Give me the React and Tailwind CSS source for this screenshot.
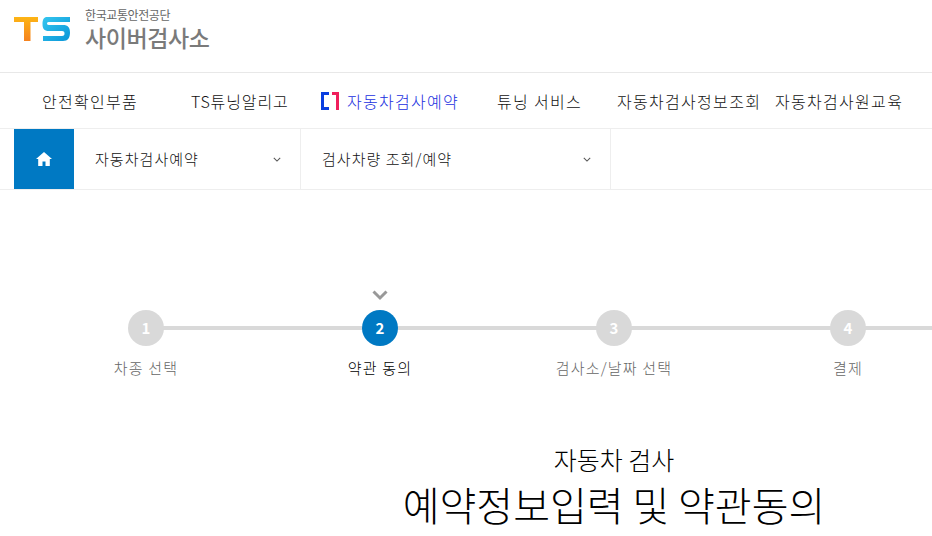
import React from "react";

const font = { fontFamily: '"Noto Sans CJK KR", "Noto Sans", sans-serif' };

function Chevron({ className }) {
  return (
    <svg viewBox="0 0 10 6" className={className} fill="none" stroke="currentColor" strokeWidth="1.300">
      <path d="M1 1l4 4 4-4" />
    </svg>
  );
}

function Logo() {
  return (
    <svg width="57" height="26" viewBox="0 0 57 26">
      <defs>
        <linearGradient id="o" x1="0" y1="0" x2="0" y2="1">
          <stop offset="0" stopColor="#fdb515" />
          <stop offset="1" stopColor="#f5821f" />
        </linearGradient>
        <linearGradient id="b" x1="0" y1="0" x2="1" y2="1">
          <stop offset="0" stopColor="#35c6ef" />
          <stop offset="1" stopColor="#0a96d8" />
        </linearGradient>
      </defs>
      <path d="M0 1h24v5H16.500v19H10V6H0z" fill="url(#o)" />
      <path d="M33 1h23v5H36c-2 0-3 .3-3 1.500S34 9 36 9h13c5 0 7 2.500 7 7.500S54 25 49 25H29v-5h19c2 0 2.500-1 2.500-2.500S50 15 48 15H35c-5 0-6.500-2.500-6.500-7S30 1 33 1z" fill="url(#b)" />
    </svg>
  );
}

function Step({ n, label, active, mark }) {
  return (
    <div className="relative w-[234px] shrink-0 flex flex-col items-center">
      <div className="absolute left-1/2 top-[41px] w-[234px] h-[4px] bg-[#d9d9d9]" />
      <div className="h-[20px] flex items-center justify-center">
        {mark && (
          <svg width="16" height="11" viewBox="0 0 16 11" fill="none" stroke="#999999" strokeWidth="3">
            <path d="M1.500 1.500L8 8l6.500-6.500" />
          </svg>
        )}
      </div>
      <div
        className={`relative mt-[5px] w-[36px] h-[36px] rounded-full flex items-center justify-center text-white text-[15px] font-bold ${active ? "bg-[#0079c3]" : "bg-[#d9d9d9]"}`}
      >
        {n}
      </div>
      <div className={`mt-[11px] text-[15px] font-light leading-[22px] tracking-[1.2px] whitespace-nowrap ${active ? "text-[#000000]" : "text-[#666666]"}`}>
        {label}
      </div>
    </div>
  );
}

export default function App() {
  return (
    <div className="w-[932px] h-[536px] overflow-hidden bg-white" style={font}>
      <header className="h-[73px] border-b border-[#e8e8e8] pl-[14px] pt-[8px] flex items-start">
        <div className="mt-[8px]"><Logo /></div>
        <div className="ml-[14px] flex flex-col">
          <span className="text-[12px] leading-[14px] text-[#666666] tracking-[-0.4px]">한국교통안전공단</span>
          <span className="mt-[1px] text-[23px] leading-[28px] font-medium text-[#7a7a7a] tracking-[-0.4px]">사이버검사소</span>
        </div>
      </header>

      <nav className="h-[56px] border-b border-[#eeeeee] flex items-center text-[16px] font-light tracking-[1.3px] text-[#111111] whitespace-nowrap">
        <span className="ml-[42px] w-[149px]">안전확인부품</span>
        <span className="w-[130px] tracking-[0.9px]">TS튜닝알리고</span>
        <span className="w-[176px] flex items-center text-[#1a30e0]">
          <svg width="18" height="18" viewBox="0 0 18 18" fill="none" strokeWidth="3" className="mr-[8px]">
            <path d="M8 1.500H1.500v15H8" stroke="#0a3ee0" />
            <path d="M11 1.500h5.500V18" stroke="#f01f5c" />
          </svg>
          자동차검사예약
        </span>
        <span className="w-[120px]">튜닝 서비스</span>
        <span className="w-[158px]">자동차검사정보조회</span>
        <span>자동차검사원교육</span>
      </nav>

      <div className="h-[61px] border-b border-[#eeeeee] pl-[14px] flex text-[15px] font-light tracking-[1.05px] text-[#111111]">
        <div className="w-[60px] bg-[#0079c3] flex items-center justify-center">
          <svg width="16" height="14" viewBox="0 0 16 14" fill="white">
            <path d="M8 0L0 7h2.200v7h4.300V9.500h3V14h4.300V7H16z" />
          </svg>
        </div>
        <div className="w-[227px] border-r border-[#eeeeee] pl-[21px] pr-[19px] flex items-center justify-between">
          <span>자동차검사예약</span>
          <Chevron className="w-[8px] h-[5px] text-[#555555]" />
        </div>
        <div className="w-[310px] border-r border-[#eeeeee] pl-[21px] pr-[19px] flex items-center justify-between">
          <span>검사차량 조회/예약</span>
          <Chevron className="w-[8px] h-[5px] text-[#555555]" />
        </div>
      </div>

      <div className="flex pt-[95px] pl-[29px]">
        <Step n="1" label="차종 선택" />
        <Step n="2" label="약관 동의" active mark />
        <Step n="3" label="검사소/날짜 선택" />
        <Step n="4" label="결제" />
      </div>

      <div className="mt-[63px] ml-[297px] w-[634px] flex flex-col items-center text-[#000000] font-light whitespace-nowrap">
        <div className="text-[25px] leading-[34px]">자동차 검사</div>
        <div className="text-[40px] leading-[56px]">예약정보입력 및 약관동의</div>
      </div>
    </div>
  );
}
